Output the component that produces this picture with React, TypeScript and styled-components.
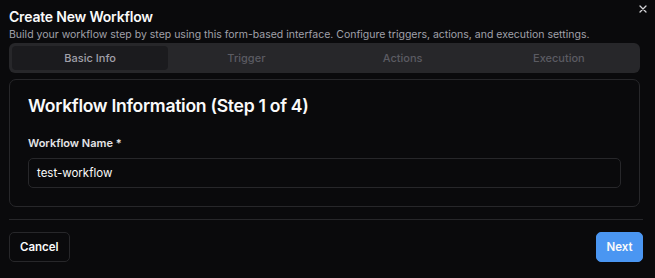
import React from "react";
import styled, { createGlobalStyle } from "styled-components";

const Global = createGlobalStyle`
  html, body { margin: 0; padding: 0; background: #0a0a0c; }
  body { font-family: Inter, "Noto Sans", sans-serif; color: #fafafa; -webkit-font-smoothing: antialiased; }
  * { box-sizing: border-box; }
`;

const Dialog = styled.div`
  position: relative;
  width: 655px;
  height: 278px;
  background: #0a0a0c;
  padding: 7px 12px 0 9px;
  display: flex;
  flex-direction: column;
`;

const Close = styled.button`
  position: absolute;
  top: 4px;
  right: 7px;
  width: 10px;
  height: 10px;
  padding: 0;
  border: none;
  background: transparent;
  color: #d4d4d8;
  display: flex;
  align-items: center;
  justify-content: center;
`;

const Title = styled.h2`
  margin: 0;
  font-size: 14px;
  line-height: 20px;
  font-weight: 600;
  letter-spacing: -0.2px;
`;

const Subtitle = styled.p`
  margin: 0;
  font-size: 10.5px;
  line-height: 16px;
  color: #a1a1aa;
`;

const Tabs = styled.div`
  margin: 0 3px 0 0;
  height: 30px;
  background: #27272a;
  border-radius: 6px;
  padding: 3px;
  display: grid;
  grid-template-columns: repeat(4, 1fr);
`;

const Tab = styled.div<{ $active?: boolean }>`
  display: flex;
  align-items: center;
  justify-content: center;
  border-radius: 4px;
  font-size: 11px;
  font-weight: 500;
  color: ${(p) => (p.$active ? "#a1a1aa" : "#5b5b62")};
  background: ${(p) => (p.$active ? "#1b1b1e" : "transparent")};
`;

const Card = styled.div`
  margin: 6px 3px 0 0;
  border: 1px solid #27272a;
  border-radius: 7px;
  padding: 14px 18px 18px 18px;
  display: flex;
  flex-direction: column;
`;

const CardTitle = styled.h3`
  margin: 0;
  font-size: 17.6px;
  line-height: 24px;
  font-weight: 600;
  letter-spacing: -0.3px;
`;

const Label = styled.label`
  margin-top: 17px;
  font-size: 11px;
  line-height: 16px;
  font-weight: 600;
  color: #e4e4e7;
`;

const Input = styled.div`
  margin-top: 7px;
  height: 30px;
  border: 1px solid #27272a;
  border-radius: 5px;
  padding: 0 8px;
  display: flex;
  align-items: center;
  font-size: 11.5px;
  color: #fafafa;
`;

const Divider = styled.hr`
  margin: 12px 0 0 0;
  border: none;
  border-top: 1px solid #27272a;
`;

const Footer = styled.div`
  margin-top: 12px;
  display: flex;
  justify-content: space-between;
`;

const Button = styled.button<{ $primary?: boolean }>`
  height: 30px;
  padding: 0 ${(p) => (p.$primary ? "9.5px" : "10px")};
  border-radius: 5px;
  font-family: inherit;
  font-size: 11.5px;
  font-weight: 600;
  color: #fafafa;
  border: 1px solid ${(p) => (p.$primary ? "#4a96f2" : "#27272a")};
  background: ${(p) => (p.$primary ? "#4a96f2" : "#0a0a0c")};
`;

export default function App() {
  return (
    <>
      <Global />
      <Dialog>
        <Close aria-label="Close">
          <svg width="8" height="8" viewBox="0 0 8 8" fill="none" stroke="currentColor" strokeWidth="1.3" strokeLinecap="round">
            <path d="M1 1L7 7M7 1L1 7" />
          </svg>
        </Close>
        <Title>Create New Workflow</Title>
        <Subtitle>
          Build your workflow step by step using this form-based interface. Configure triggers, actions, and execution settings.
        </Subtitle>
        <Tabs>
          <Tab $active>Basic Info</Tab>
          <Tab>Trigger</Tab>
          <Tab>Actions</Tab>
          <Tab>Execution</Tab>
        </Tabs>
        <Card>
          <CardTitle>Workflow Information (Step 1 of 4)</CardTitle>
          <Label>Workflow Name *</Label>
          <Input>test-workflow</Input>
        </Card>
        <Divider />
        <Footer>
          <Button>Cancel</Button>
          <Button $primary>Next</Button>
        </Footer>
      </Dialog>
    </>
  );
}
